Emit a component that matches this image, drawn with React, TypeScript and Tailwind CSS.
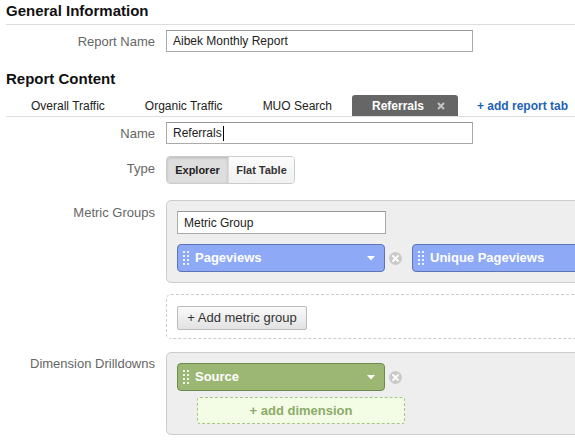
import React from "react";

const labelCls = "w-[149px] shrink-0 text-right text-[13px] leading-[15px] text-[#666]";

function Grip() {
  return (
    <svg width="6" height="15" viewBox="0 0 6 15" className="shrink-0">
      {[0, 4, 8, 12].map((y) => (
        <g key={y} fill="#fff" fillOpacity="0.85">
          <rect x="0" y={y} width="2" height="2" />
          <rect x="4" y={y} width="2" height="2" />
        </g>
      ))}
    </svg>
  );
}

function Caret() {
  return (
    <svg width="8" height="5" viewBox="0 0 8 5" className="shrink-0">
      <polygon points="0,0 8,0 4,4.5" fill="#fff" />
    </svg>
  );
}

function RemoveIcon() {
  return (
    <svg width="13" height="13" viewBox="0 0 13 13" className="shrink-0">
      <circle cx="6.5" cy="6.5" r="6.5" fill="#cacaca" />
      <path d="M4 4 L9 9 M9 4 L4 9" stroke="#fff" strokeWidth="1.8" strokeLinecap="round" />
    </svg>
  );
}

function Pill({ label, tone }: { label: string; tone: "blue" | "green" }) {
  const colors =
    tone === "blue"
      ? "bg-[#8eaaf7] border-[#5f74b4]"
      : "bg-[#9cb774] border-[#6e8a4f]";
  return (
    <div
      className={`flex h-[28px] w-[208px] shrink-0 items-center rounded-[4px] border pl-[5px] pr-[9px] ${colors}`}
    >
      <Grip />
      <span className="ml-[6px] flex-1 text-[13px] font-bold text-white">{label}</span>
      <Caret />
    </div>
  );
}

export default function App() {
  const tabs = ["Overall Traffic", "Organic Traffic", "MUO Search"];

  return (
    <div
      className="h-[445px] w-[575px] overflow-hidden bg-white pl-[6px] text-[#222]"
      style={{ fontFamily: '"Liberation Sans", Arial, sans-serif' }}
    >
      {/* General Information */}
      <div className="border-b border-[#ddd] pb-[4px] pt-[2px] text-[15px] font-bold leading-[18px] text-[#111]">
        General Information
      </div>

      <div className="mt-[5px] flex gap-[11px]">
        <div className={`${labelCls} pt-[4px]`}>Report Name</div>
        <div className="flex h-[22px] w-[307px] items-center border border-[#aaa] border-t-[#999] px-[6px] text-[12px]">
          Aibek Monthly Report
        </div>
      </div>

      {/* Report Content */}
      <div className="mt-[18px] text-[15px] font-bold leading-[18px] text-[#111]">Report Content</div>

      <div className="mt-[7px] flex h-[22px] items-end border-b border-[#ddd] pl-[5px] text-[12px]">
        {tabs.map((t) => (
          <div key={t} className="flex h-[21px] items-center px-[20px] text-[#222]">
            {t}
          </div>
        ))}
        <div className="flex h-[21px] w-[106px] items-center rounded-t-[3px] bg-[#666] pl-[20px]">
          <span className="font-bold text-white">Referrals</span>
          <svg width="8" height="8" viewBox="0 0 8 8" className="ml-[13px]">
            <path d="M1 1 L7 7 M7 1 L1 7" stroke="#c4c4c4" strokeWidth="2" />
          </svg>
        </div>
        <div className="flex h-[21px] items-center pl-[19px] font-bold text-[#1d63b6]">+ add report tab</div>
      </div>

      <div className="mt-[5px] flex gap-[11px]">
        <div className={`${labelCls} pt-[4px]`}>Name</div>
        <div className="flex h-[22px] w-[307px] items-center border border-[#aaa] border-t-[#999] px-[6px] text-[12px]">
          Referrals
          <span className="ml-px inline-block h-[15px] w-px bg-black" />
        </div>
      </div>

      <div className="mt-[12px] flex gap-[11px]">
        <div className={`${labelCls} pt-[5px]`}>Type</div>
        <div className="flex h-[28px] overflow-hidden rounded-[4px] border border-[#ccc] text-[11px] font-bold">
          <div className="flex w-[61px] items-center justify-center bg-[#dedede] text-[#222] shadow-[inset_0_1px_3px_rgba(0,0,0,0.18)]">
            Explorer
          </div>
          <div className="flex w-[66px] items-center justify-center border-l border-[#ddd] bg-gradient-to-b from-[#fcfcfc] to-[#f0f0f0] text-[#333]">
            Flat Table
          </div>
        </div>
      </div>

      {/* Metric Groups */}
      <div className="mt-[16px] flex gap-[11px]">
        <div className={`${labelCls} pt-[5px]`}>Metric Groups</div>
        <div className="w-[440px] shrink-0 rounded-[5px] border border-[#ccc] bg-[#eee] px-[10px] pb-[10px] pt-[10px]">
          <div className="flex h-[23px] w-[209px] items-center border border-[#aaa] border-t-[#999] bg-white px-[6px] text-[12px]">
            Metric Group
          </div>
          <div className="mt-[10px] flex items-center">
            <Pill label="Pageviews" tone="blue" />
            <div className="ml-[4px] mr-[10px]">
              <RemoveIcon />
            </div>
            <Pill label="Unique Pageviews" tone="blue" />
          </div>
        </div>
      </div>

      <div className="mt-[11px] flex gap-[11px]">
        <div className="w-[149px] shrink-0" />
        <div className="h-[45px] w-[440px] shrink-0 rounded-[5px] border border-dashed border-[#ccc] px-[10px] pt-[11px]">
          <div className="flex h-[24px] w-[130px] items-center justify-center rounded-[2px] border border-[#bbb] bg-gradient-to-b from-[#fafafa] to-[#e2e2e2] text-[13px] text-[#333]">
            + Add metric group
          </div>
        </div>
      </div>

      {/* Dimension Drilldowns */}
      <div className="mt-[13px] flex gap-[11px]">
        <div className={`${labelCls} pt-[4px]`}>Dimension Drilldowns</div>
        <div className="w-[440px] shrink-0 rounded-[5px] border border-[#ccc] bg-[#eee] px-[10px] pb-[10px] pt-[10px]">
          <div className="flex items-center">
            <Pill label="Source" tone="green" />
            <div className="ml-[4px]">
              <RemoveIcon />
            </div>
          </div>
          <div className="ml-[20px] mt-[6px] flex h-[27px] w-[208px] items-center justify-center rounded-[3px] border border-dashed border-[#a9c48b] bg-[#f3fde6] text-[13px] font-bold text-[#8cab69]">
            + add dimension
          </div>
        </div>
      </div>
    </div>
  );
}
